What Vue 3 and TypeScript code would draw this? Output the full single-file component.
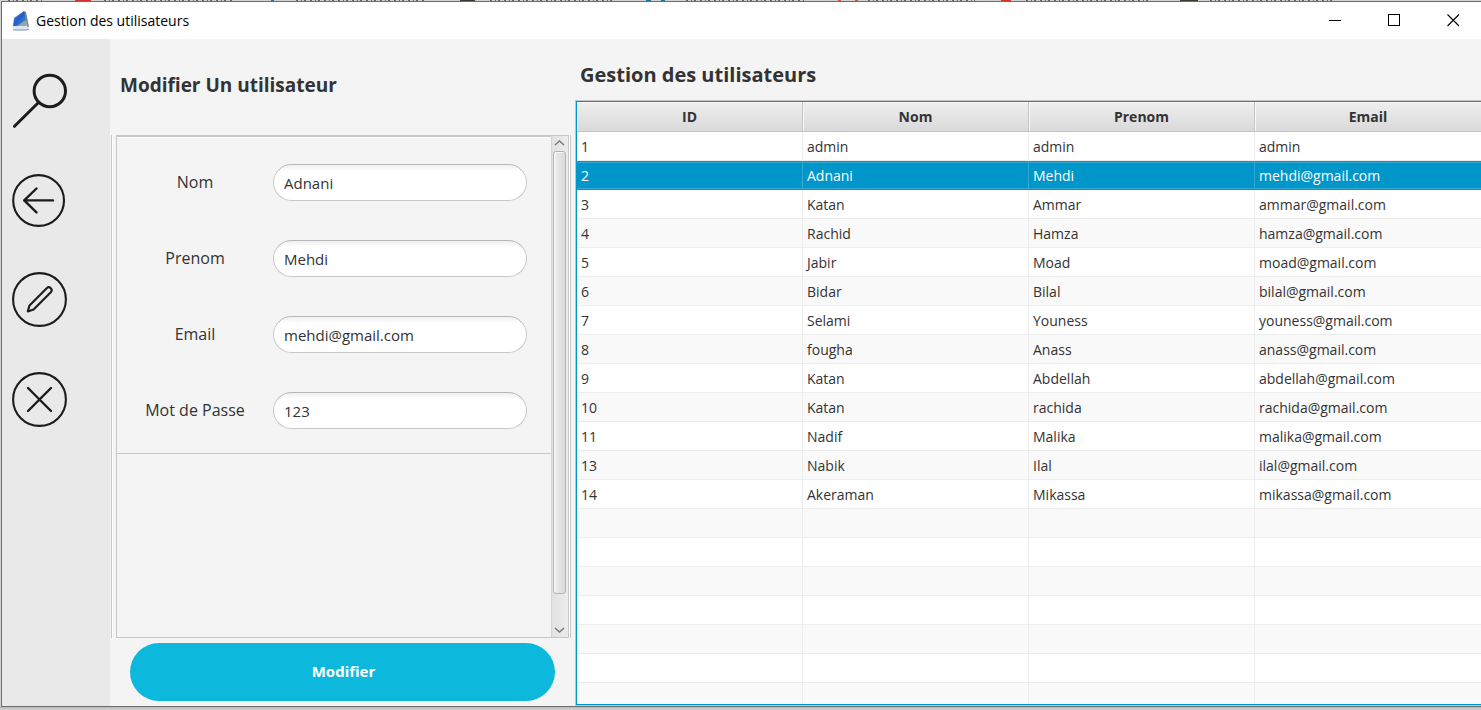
<script setup lang="ts">
import { computed, reactive, ref } from 'vue'

interface User {
  id: number
  nom: string
  prenom: string
  email: string
}

interface Field {
  key: 'nom' | 'prenom' | 'email' | 'password'
  label: string
}

const users: User[] = [
  { id: 1, nom: 'admin', prenom: 'admin', email: 'admin' },
  { id: 2, nom: 'Adnani', prenom: 'Mehdi', email: 'mehdi@gmail.com' },
  { id: 3, nom: 'Katan', prenom: 'Ammar', email: 'ammar@gmail.com' },
  { id: 4, nom: 'Rachid', prenom: 'Hamza', email: 'hamza@gmail.com' },
  { id: 5, nom: 'Jabir', prenom: 'Moad', email: 'moad@gmail.com' },
  { id: 6, nom: 'Bidar', prenom: 'Bilal', email: 'bilal@gmail.com' },
  { id: 7, nom: 'Selami', prenom: 'Youness', email: 'youness@gmail.com' },
  { id: 8, nom: 'fougha', prenom: 'Anass', email: 'anass@gmail.com' },
  { id: 9, nom: 'Katan', prenom: 'Abdellah', email: 'abdellah@gmail.com' },
  { id: 10, nom: 'Katan', prenom: 'rachida', email: 'rachida@gmail.com' },
  { id: 11, nom: 'Nadif', prenom: 'Malika', email: 'malika@gmail.com' },
  { id: 13, nom: 'Nabik', prenom: 'Ilal', email: 'ilal@gmail.com' },
  { id: 14, nom: 'Akeraman', prenom: 'Mikassa', email: 'mikassa@gmail.com' },
]

const columns = ['ID', 'Nom', 'Prenom', 'Email']

const fields: Field[] = [
  { key: 'nom', label: 'Nom' },
  { key: 'prenom', label: 'Prenom' },
  { key: 'email', label: 'Email' },
  { key: 'password', label: 'Mot de Passe' },
]

const form = reactive({ nom: 'Adnani', prenom: 'Mehdi', email: 'mehdi@gmail.com', password: '123' })
const selectedId = ref(2)
const fillerRows = computed(() => Math.max(0, 40 - users.length))

function select(user: User) {
  selectedId.value = user.id
  form.nom = user.nom
  form.prenom = user.prenom
  form.email = user.email
}
</script>

<template>
  <div class="desktop">
    <svg class="backdrop" height="2" width="100%" aria-hidden="true">
      <g stroke-width="2" stroke="#6b6460" stroke-dasharray="2 3 1 2 2 4">
        <path d="M8 1H42M104 1H232M296 1H426M490 1H612M686 1H806M868 1H975M1026 1H1148M1210 1H1334" />
      </g>
      <path d="M75 1H91M1001 1H1011" stroke="#d3312a" stroke-width="2" />
      <path d="M1180 1H1198M460 1H475" stroke="#3b3930" stroke-width="2" />
      <path d="M646 1H651M661 1H665M271 1H274" stroke="#1a73a5" stroke-width="2" />
      <path d="M838 1H841M855 1H858" stroke="#d8503e" stroke-width="2" />
    </svg>

    <div class="window">
      <header class="titlebar">
        <svg class="logo" width="18" height="22" viewBox="0 0 18 22" aria-hidden="true">
          <defs>
            <linearGradient id="screen" x1="0" y1="0" x2="1" y2="1">
              <stop offset="0" stop-color="#7ea6e4" />
              <stop offset="0.45" stop-color="#2458c4" />
              <stop offset="0.7" stop-color="#2c83cf" />
              <stop offset="1" stop-color="#8d9690" />
            </linearGradient>
          </defs>
          <path d="M12 1L14 2L17 17H3Z" fill="#76828f" />
          <path d="M12 1L2 8L1 17L15 16Z" fill="url(#screen)" />
          <path d="M5 16L14 10L16 16Z" fill="#a9aea8" opacity="0.8" />
          <path d="M1 16H15L17 19L15 20H1Z" fill="#dce6ee" />
          <path d="M1 20H15L17 19" fill="none" stroke="#7494b8" />
        </svg>
        <span class="title">Gestion des utilisateurs</span>
        <div class="controls">
          <button type="button" aria-label="Réduire">
            <svg width="13" height="13" viewBox="0 0 13 13"><path d="M0 6.5H12" stroke="#000" /></svg>
          </button>
          <button type="button" aria-label="Agrandir">
            <svg width="13" height="13" viewBox="0 0 13 13">
              <rect x="0.5" y="0.5" width="11" height="11" fill="none" stroke="#000" />
            </svg>
          </button>
          <button type="button" aria-label="Fermer">
            <svg width="13" height="13" viewBox="0 0 13 13"><path d="M0.5 0.5L12 12M12 0.5L0.5 12" stroke="#000" stroke-width="1.1" /></svg>
          </button>
        </div>
      </header>

      <div class="body">
        <nav class="sidebar">
          <button type="button" aria-label="Rechercher">
            <svg viewBox="0 0 56 56">
              <circle cx="37.8" cy="19" r="15.7" stroke-width="3" />
              <path d="M26.5 30.5L2.5 54.3" stroke-width="3" />
            </svg>
          </button>
          <button type="button" aria-label="Retour">
            <svg viewBox="0 0 56 56">
              <circle cx="26.6" cy="28.5" r="25.4" />
              <path d="M12.2 28.4H41M24.5 16.5L12.2 28.4L24.5 40.4" stroke-width="2.4" />
            </svg>
          </button>
          <button type="button" aria-label="Modifier">
            <svg viewBox="0 0 56 56">
              <circle cx="27.5" cy="27.5" r="26.4" />
              <path d="M15.8 39.4L17.5 33.4L34.7 16.2C37.6 13.6 41.3 17.3 38.8 20.2L21.6 37.4Z" />
            </svg>
          </button>
          <button type="button" aria-label="Supprimer">
            <svg viewBox="0 0 56 56">
              <circle cx="27.5" cy="27.5" r="26.4" />
              <path d="M16 16L39 39M39 16L16 39" stroke-width="2.4" />
            </svg>
          </button>
        </nav>

        <form class="editor" @submit.prevent>
          <h2>Modifier Un utilisateur</h2>
          <div class="frame">
            <div class="pane">
              <div class="viewport">
                <div class="fields">
                  <template v-for="f in fields" :key="f.key">
                    <label :for="f.key">{{ f.label }}</label>
                    <input :id="f.key" v-model="form[f.key]" type="text" />
                  </template>
                </div>
              </div>
              <div class="scrollbar" aria-hidden="true">
                <svg width="11" height="6" viewBox="0 0 11 6"><path d="M1 5L5.5 1L10 5" /></svg>
                <div class="track"><div class="thumb"></div></div>
                <svg width="11" height="6" viewBox="0 0 11 6"><path d="M1 1L5.5 5L10 1" /></svg>
              </div>
            </div>
          </div>
          <button class="submit" type="submit">Modifier</button>
        </form>

        <main class="list">
          <h1>Gestion des utilisateurs</h1>
          <div class="grid">
            <table>
              <thead>
                <tr>
                  <th v-for="c in columns" :key="c" scope="col">{{ c }}</th>
                </tr>
              </thead>
              <tbody>
                <tr v-for="u in users" :key="u.id" :class="{ selected: u.id === selectedId }" @click="select(u)">
                  <td>{{ u.id }}</td>
                  <td>{{ u.nom }}</td>
                  <td>{{ u.prenom }}</td>
                  <td>{{ u.email }}</td>
                </tr>
                <tr v-for="n in fillerRows" :key="'empty' + n" aria-hidden="true">
                  <td v-for="c in columns" :key="c"></td>
                </tr>
              </tbody>
            </table>
          </div>
        </main>
      </div>
    </div>
  </div>
</template>

<style>
body {
  margin: 0;
}
</style>

<style scoped>
.desktop {
  box-sizing: border-box;
  display: flex;
  flex-direction: column;
  height: 100vh;
  padding: 1px 0 3px 1px;
  overflow: hidden;
  position: relative;
  background: linear-gradient(to top, #d2d2d2, #b8b8b8 3px, #d2d2d2 4px);
  color: #333;
  font-family: 'Segoe UI', 'Open Sans', 'Noto Sans', sans-serif;
}

.backdrop {
  position: absolute;
  top: -1px;
  left: 0;
}

.window {
  position: relative;
  flex: 1;
  min-height: 0;
  display: flex;
  flex-direction: column;
  border: 1px solid #6e6e6e;
  border-right: 0;
  background: #f4f4f4;
}

button {
  padding: 0;
  border: 0;
  background: none;
  font: inherit;
  cursor: pointer;
}

.titlebar {
  display: flex;
  align-items: center;
  height: 37px;
  padding-left: 10px;
  background: #fff;
  color: #000;
}

.logo {
  margin-right: 6px;
}

.title {
  font-size: 14px;
  line-height: 20px;
}

.controls {
  display: flex;
  gap: 12px;
  margin-left: auto;
  padding-right: 4px;
}

.controls button {
  display: flex;
  align-items: center;
  justify-content: center;
  width: 47px;
  height: 36px;
}

.body {
  flex: 1;
  min-height: 0;
  display: flex;
}

.sidebar {
  flex: none;
  display: flex;
  flex-direction: column;
  gap: 44px;
  width: 98px;
  padding: 33px 0 0 10px;
  background: #e9e9e9;
}

.sidebar button {
  width: 56px;
  height: 56px;
}

.sidebar svg {
  display: block;
  fill: none;
  stroke: #1c1c1c;
  stroke-width: 2.1;
  stroke-linecap: round;
  stroke-linejoin: round;
}

.editor {
  flex: none;
  display: flex;
  flex-direction: column;
  width: 465px;
}

h1,
h2 {
  margin: 0;
  line-height: 28px;
  font-weight: 700;
}

h1 {
  padding: 22px 5px 12px;
  font-size: 20px;
}

h2 {
  padding: 32px 10px 36px;
  font-size: 19px;
}

.frame {
  flex: 1;
  min-height: 0;
  display: flex;
  margin: 0 4px 0 1px;
  padding: 0 1px 0 4px;
  border: solid #c8c8c8;
  border-width: 0 1px;
  box-shadow: inset 1px 0 #fff, inset -1px 0 #fff;
}

.pane {
  flex: 1;
  display: flex;
  border: 1px solid #c8c8c8;
}

.viewport {
  flex: 1;
  min-width: 0;
  border-top: 1px solid #c8c8c8;
  overflow: hidden;
}

.fields {
  display: grid;
  grid-template-columns: 156px 1fr;
  row-gap: 39px;
  align-items: center;
  padding: 27px 24px 24px 0;
  border-bottom: 1px solid #c8c8c8;
  box-shadow: inset 0 1px #fff;
}

label {
  padding-bottom: 2px;
  text-align: center;
  font-size: 16px;
  line-height: 24px;
}

input {
  box-sizing: border-box;
  width: 100%;
  height: 37px;
  padding: 0 10px;
  border: 1px solid #c8c8c8;
  border-top-color: #b8b8b8;
  border-radius: 19px;
  background: linear-gradient(#f0f0f0, #fff 6px);
  color: #333;
  font: inherit;
  font-size: 15px;
  outline: 0;
}

.scrollbar {
  display: flex;
  flex-direction: column;
  align-items: center;
  gap: 5px;
  width: 14px;
  padding: 4px 2px 4px 0;
  border-left: 1px solid #d4d4d4;
  background: linear-gradient(to right, #e2e2e2, #ececec);
}

.scrollbar svg {
  fill: none;
  stroke: #777;
  stroke-width: 1.4;
}

.track {
  flex: 1;
  width: 13px;
}

.thumb {
  box-sizing: border-box;
  height: 94%;
  border: 1px solid #b4b4b4;
  border-radius: 3px;
  background: linear-gradient(to right, #efefef, #d9d9d9);
  box-shadow: inset 1px 1px #fafafa;
}

.submit {
  height: 58px;
  margin: 5px 20px;
  padding: 0 0 2px 2px;
  border-radius: 29px;
  background: #0cb8dc;
  color: #fff;
  font-size: 15px;
  font-weight: 700;
}

.list {
  flex: 1;
  min-width: 0;
  display: flex;
  flex-direction: column;
}

.grid {
  flex: 1;
  min-height: 0;
  overflow: hidden;
  margin: 0 0 1px 1px;
  border: 1px solid #0096c9;
  border-right: 0;
  background: #fff;
  box-shadow: 0 0 0 1px #c0c4c6;
}

table {
  width: 100%;
  table-layout: fixed;
  border-collapse: separate;
  border-spacing: 0;
  font-size: 14px;
  line-height: 20px;
}

th {
  box-sizing: border-box;
  height: 30px;
  padding: 0;
  border: solid #c4c4c4;
  border-width: 0 1px 1px 0;
  background: linear-gradient(#efefef, #d9d9d9);
  box-shadow: inset 1px 1px #f8f8f8;
}

td {
  box-sizing: border-box;
  height: 29px;
  padding: 1px 4px 0;
  border: solid #ededed;
  border-width: 0 1px 1px 0;
}

th:last-child,
td:last-child {
  border-right: 0;
}

tbody tr:nth-child(even) {
  background: #f9f9f9;
}

tbody tr.selected {
  background: #0096c9;
  color: #fff;
}

.selected td {
  border-color: #0096c9;
  border-right-color: #30a9d4;
  box-shadow: inset 0 1px #0096c9, inset 0 2px #30a9d4, inset 0 -1px #30a9d4;
}
</style>
